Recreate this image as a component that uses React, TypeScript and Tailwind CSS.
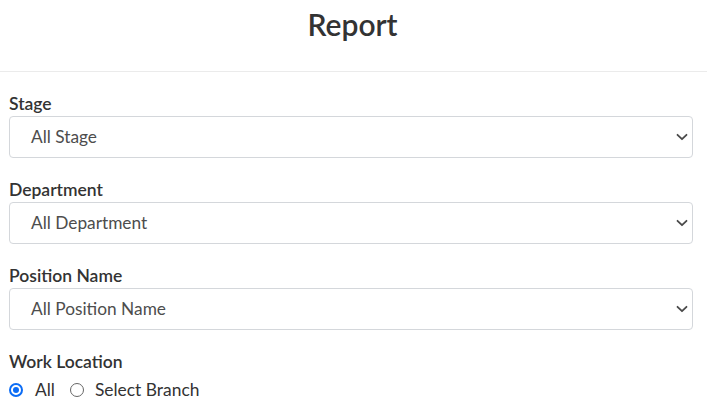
import React from "react";

function Chevron() {
  return (
    <svg width="12" height="8" viewBox="0 0 12 8" fill="none">
      <path d="M1.5 1.8 L6 6.2 L10.5 1.8" stroke="#4a4a4a" strokeWidth="1.8" strokeLinecap="round" strokeLinejoin="round" />
    </svg>
  );
}

function Field({ label, value }: { label: string; value: string }) {
  return (
    <div className="mb-[20px]">
      <div className="text-[17.5px] font-semibold leading-[24px] text-[#333]">{label}</div>
      <div className="h-[42px] border border-[#d4d7db] rounded-[4px] flex items-center justify-between pl-[21px] pr-[4px]">
        <span className="text-[17.3px] text-[#4d4d4d]">{value}</span>
        <Chevron />
      </div>
    </div>
  );
}

export default function App() {
  return (
    <div className="w-[707px] h-[408px] bg-white overflow-hidden" style={{ fontFamily: "Lato, 'Open Sans', sans-serif" }}>
      <div className="h-[72px] border-b border-[#ebebeb] flex justify-center">
        <h1 className="text-[30px] font-semibold text-[#333] leading-[48px] mt-[0px] ml-[-2px]">Report</h1>
      </div>
      <div className="pl-[9px] pr-[14px] pt-[20px]">
        <Field label="Stage" value="All Stage" />
        <Field label="Department" value="All Department" />
        <Field label="Position Name" value="All Position Name" />
        <div className="text-[17.5px] font-semibold leading-[24px] text-[#333]">Work Location</div>
        <div className="flex items-center text-[17.4px] text-[#333] leading-[24px] mt-[4px]">
          <span className="w-[14px] h-[14px] rounded-full border-2 border-[#0b6cf5] flex items-center justify-center">
            <span className="w-[6px] h-[6px] rounded-full bg-[#0b6cf5]" />
          </span>
          <span className="ml-[12px]">All</span>
          <span className="w-[14px] h-[14px] rounded-full border border-[#666] ml-[15px]" />
          <span className="ml-[11px]">Select Branch</span>
        </div>
      </div>
    </div>
  );
}
